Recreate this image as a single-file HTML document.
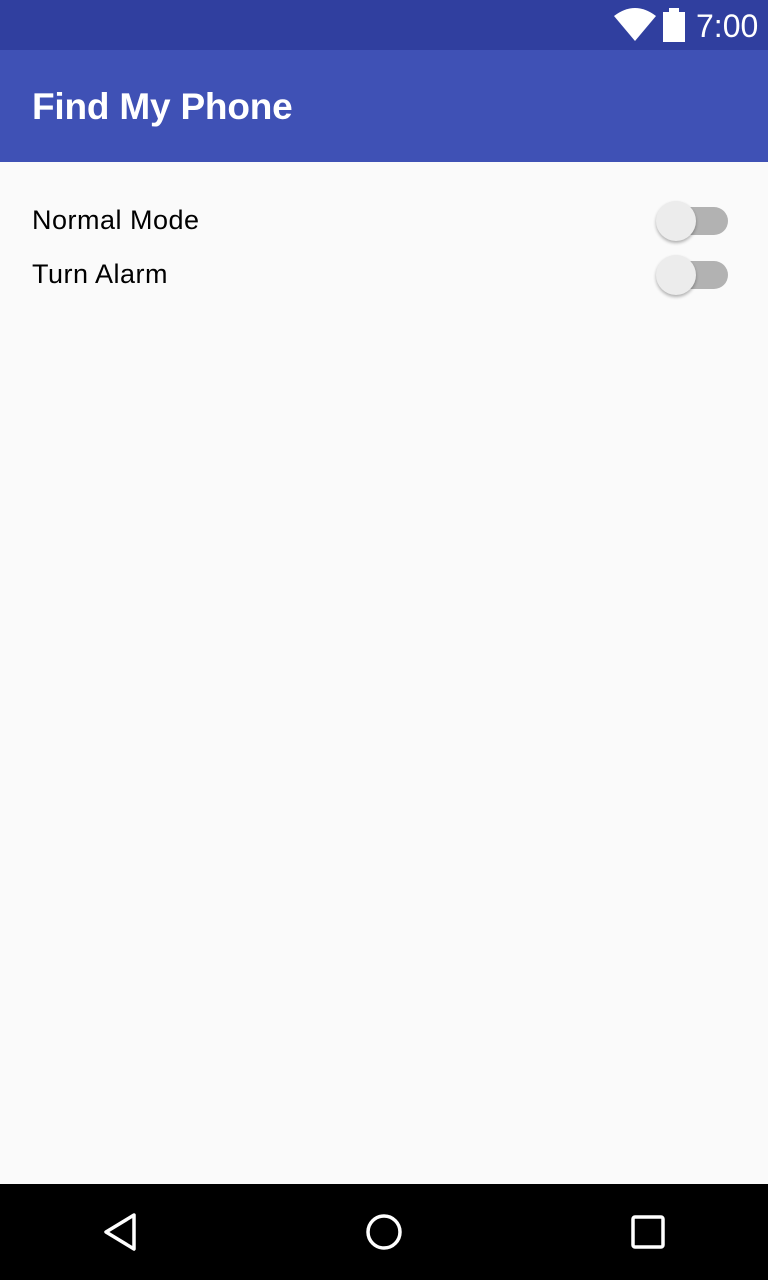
<!DOCTYPE html>
<html><head><style>
body{margin:0;width:768px;height:1280px;position:relative;background:#fafafa;font-family:"Liberation Sans",sans-serif;overflow:hidden}
.sb{position:absolute;top:0;left:0;width:768px;height:50px;background:#303f9f}
.tb{position:absolute;top:50px;left:0;width:768px;height:112px;background:#3f51b5}
.title{position:absolute;left:32px;top:85px;color:#fff;font-size:37px;line-height:44px;font-weight:bold;letter-spacing:-0.2px}
.lbl{position:absolute;left:32px;font-size:27px;color:#000;letter-spacing:0.5px}
.track{position:absolute;left:668px;width:60px;height:28px;border-radius:14px;background:#b2b2b2}
.thumb{position:absolute;left:656px;width:40px;height:40px;border-radius:50%;background:#ececec;box-shadow:0 2px 3px rgba(0,0,0,.3)}
.nav{position:absolute;top:1184px;left:0;width:768px;height:96px;background:#000}
</style></head><body>
<div class="sb">
<svg style="position:absolute;left:614px;top:8px" width="42" height="34" viewBox="0 0 42 34"><path d="M0 8 Q21 -8 42 8 L21 33 Z" fill="#fff"/></svg>
<div style="position:absolute;left:663px;top:12px;width:22px;height:30px;background:#fff"></div>
<div style="position:absolute;left:669px;top:8px;width:10px;height:5px;background:#fff"></div>
<div style="position:absolute;left:696px;top:7px;color:#fff;font-size:32px;line-height:38px">7:00</div>
</div>
<div class="tb"></div>
<div class="title">Find My Phone</div>
<div class="lbl" style="top:205px">Normal Mode</div>
<div class="lbl" style="top:259px">Turn Alarm</div>
<div class="track" style="top:207px"></div><div class="thumb" style="top:201px"></div>
<div class="track" style="top:261px"></div><div class="thumb" style="top:255px"></div>
<div class="nav">
<svg style="position:absolute;left:100px;top:28px" width="40" height="40" viewBox="0 0 40 40"><path d="M34 3 L6 20 L34 37 Z" fill="none" stroke="#fff" stroke-width="3.5" stroke-linejoin="round"/></svg>
<svg style="position:absolute;left:364px;top:28px" width="40" height="40" viewBox="0 0 40 40"><circle cx="20" cy="20" r="16" fill="none" stroke="#fff" stroke-width="3.5"/></svg>
<svg style="position:absolute;left:628px;top:28px" width="40" height="40" viewBox="0 0 40 40"><rect x="5" y="5" width="30" height="30" rx="2" fill="none" stroke="#fff" stroke-width="3.5"/></svg>
</div>
</body></html>
